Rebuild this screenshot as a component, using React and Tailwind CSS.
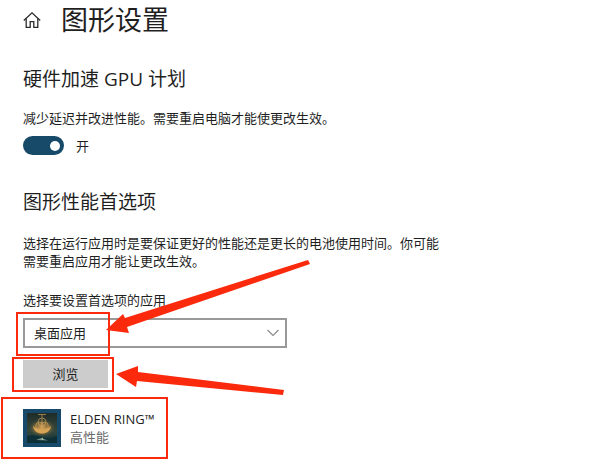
import { useState } from 'react';

function HomeIcon() {
  return (
    <svg viewBox="0 0 18 18" className="size-[18px]" fill="none" stroke="#2b2b2b" strokeWidth="1.3">
      <path d="M0.8 9.4 L9 1.8 L17.2 9.4" />
      <path d="M3.2 7.4 V16.4 H7.2 V10.6 H10.8 V16.4 H14.8 V7.4" />
    </svg>
  );
}

function GameArt() {
  return (
    <svg viewBox="0 0 38 38" className="size-[38px] shrink-0" aria-hidden="true">
      <defs>
        <radialGradient id="glow" cx="50%" cy="50%" r="50%">
          <stop offset="0" stopColor="#dba655" />
          <stop offset="0.5" stopColor="#8f743f" stopOpacity="0.8" />
          <stop offset="1" stopColor="#1e3431" stopOpacity="0" />
        </radialGradient>
        <linearGradient id="sky" x1="0" y1="0" x2="0" y2="1">
          <stop offset="0" stopColor="#1f2c28" />
          <stop offset="0.6" stopColor="#34493d" />
          <stop offset="1" stopColor="#0b2f38" />
        </linearGradient>
      </defs>
      <rect width="38" height="38" fill="#17496a" />
      <rect x="4" y="4" width="30" height="30" fill="url(#sky)" />
      <ellipse cx="19" cy="19" rx="15" ry="10" fill="url(#glow)" />
      <path d="M10 17 C11 27 27 27 28 17 C25 21 13 21 10 17 Z" fill="#e0a957" opacity="0.9" />
      <g fill="none" stroke="#cf9f5a" strokeWidth="0.8" opacity="0.85">
        <path d="M15 5.5 H23" />
        <path d="M19 5 V22" />
        <circle cx="19" cy="13" r="4" />
        <circle cx="16.5" cy="17" r="3.8" />
        <circle cx="21.5" cy="17" r="3.8" />
      </g>
      <path d="M4 27 Q12 25 19 28 T34 27 V34 H4 Z" fill="#0d3036" />
      <path d="M13 31 L18 29 L25 31.5 Z" fill="#6f8f86" />
      <path d="M18.5 31 L19.5 28 L20.5 31 Z" fill="#b9c2a4" />
    </svg>
  );
}

function Arrows() {
  return (
    <svg
      viewBox="0 0 220 160"
      className="absolute -top-[68px] left-[77px] h-[160px] w-[220px] pointer-events-none"
      fill="#fb2a0c"
      aria-hidden="true"
    >
      <path d="M6 80 L23 64 L25 68 L208 10 L210 14 L27 77 L29 83 Z" />
      <path d="M16 124 L38 116 L38 122 L184 140 L183 145 L37 131 L36 137 Z" />
    </svg>
  );
}

export default function App() {
  const [gpuScheduling, setGpuScheduling] = useState(true);
  const [appType, setAppType] = useState('desktop');

  return (
    <main className="min-h-screen bg-white px-[23px] pt-1 pb-5 text-[13px] leading-[18px] text-[#1f1f1f] font-['Open_Sans','Noto_Sans_CJK_SC',sans-serif]">
      <header className="flex items-center gap-5">
        <HomeIcon />
        <h1 className="text-[27px] leading-8">图形设置</h1>
      </header>

      {/* GPU scheduling */}
      <section className="mt-[31px]">
        <h2 className="text-[19px] leading-6">硬件加速 GPU 计划</h2>
        <p className="mt-[18px]">减少延迟并改进性能。需要重启电脑才能使更改生效。</p>
        <label className="mt-[9px] flex w-fit items-center gap-3">
          <span className="relative flex">
            <input
              type="checkbox"
              role="switch"
              checked={gpuScheduling}
              onChange={(e) => setGpuScheduling(e.target.checked)}
              className="peer h-[19px] w-[41px] appearance-none rounded-full border-2 border-[#1f1f1f] bg-white checked:border-[#174a68] checked:bg-[#174a68]"
            />
            <span className="pointer-events-none absolute top-[5px] left-[5px] size-[10px] rounded-full bg-[#1f1f1f] peer-checked:left-[27px] peer-checked:bg-white" />
          </span>
          {gpuScheduling ? '开' : '关'}
        </label>
      </section>

      {/* Per-app preference */}
      <section className="mt-[35px]">
        <h2 className="text-[19px] leading-6">图形性能首选项</h2>
        <p className="mt-5 max-w-[424px]">
          选择在运行应用时是要保证更好的性能还是更长的电池使用时间。你可能需要重启应用才能让更改生效。
        </p>
        <label htmlFor="app-type" className="mt-[21px] block">
          选择要设置首选项的应用
        </label>

        <div className="relative mt-[9px]">
          <div className="relative w-full max-w-[264px]">
            <select
              id="app-type"
              value={appType}
              onChange={(e) => setAppType(e.target.value)}
              className="block h-[30px] w-full appearance-none border-2 border-[#999] bg-white px-[9px]"
            >
              <option value="desktop">桌面应用</option>
              <option value="store">Microsoft Store 应用</option>
            </select>
            <svg
              viewBox="0 0 12 8"
              className="pointer-events-none absolute top-[11px] right-2 h-2 w-3"
              fill="none"
              stroke="#8a8a8a"
              strokeWidth="1.2"
            >
              <path d="M0.5 1 L6 6.5 L11.5 1" />
            </svg>
            <span className="pointer-events-none absolute -top-[6px] -left-[7px] h-11 w-[94px] border-2 border-[#fb2a0c]" />
          </div>

          <div className="relative mt-3 w-fit">
            <button type="button" className="block h-7 w-[85px] bg-[#cccccc]">
              浏览
            </button>
            <span className="pointer-events-none absolute -top-[3px] -left-[11px] h-[35px] w-[102px] border-2 border-[#fb2a0c]" />
          </div>
          <Arrows />
        </div>

        <div className="relative mt-[21px] flex w-fit items-center gap-[9px]">
          <GameArt />
          <div>
            <div>ELDEN RING™</div>
            <div className="text-[#6b6b6b]">高性能</div>
          </div>
          <span className="pointer-events-none absolute -top-3 -left-[22px] h-[62px] w-[167px] border-2 border-[#fb2a0c]" />
        </div>
      </section>
    </main>
  );
}
